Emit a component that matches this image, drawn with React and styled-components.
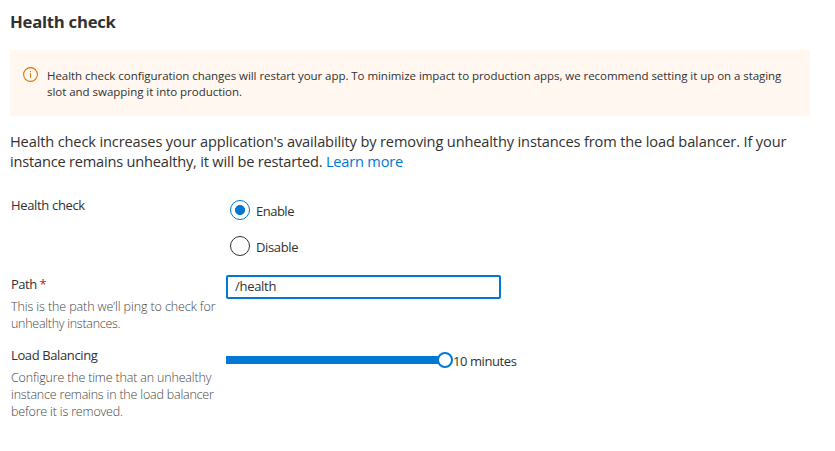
import React from "react";
import styled, { createGlobalStyle } from "styled-components";

const GlobalStyle = createGlobalStyle`
  * { box-sizing: border-box; }
  body {
    margin: 0;
    background: #fff;
    color: #323130;
    font-family: "Open Sans", "Noto Sans", sans-serif;
    font-size: 13px;
  }
`;

const Page = styled.main`
  width: 835px;
  height: 451px;
  padding: 10px 25px 0 10px;
  overflow: hidden;
`;

const Line = styled.span`
  display: block;
  white-space: nowrap;
  letter-spacing: ${(p) => p.$track || 0}px;
`;

const Title = styled.h1`
  margin: 0 0 16px;
  font-size: 16.7px;
  line-height: 24px;
  font-weight: 700;
`;

const Notice = styled.section`
  display: flex;
  gap: 9px;
  height: 66px;
  padding: 17px 13px 0;
  background: #fff7f0;
`;

const NoticeIcon = styled.svg`
  width: 15px;
  height: 15px;
  flex: none;
`;

const NoticeText = styled.p`
  margin: 1px 0 0;
  font-size: 11.5px;
  line-height: 16px;
`;

const Description = styled.p`
  margin: 15px 0 0;
  font-size: 14.6px;
  line-height: 20px;
`;

const Link = styled.a`
  color: #0078d4;
  text-decoration: none;
`;

const Form = styled.form`
  padding-left: 1px;
  margin-top: 26px;
`;

const Row = styled.div`
  display: grid;
  grid-template-columns: 215px 1fr;
  height: ${(p) => p.$height}px;
`;

const Label = styled.div`
  font-size: 13px;
  line-height: 17px;
`;

const Required = styled.span`
  color: #b8202b;
`;

const Hint = styled.div`
  margin-top: 5px;
  color: #484644;
  font-size: 12.5px;
  font-weight: 300;
  line-height: 17px;
`;

const RadioGroup = styled.div`
  display: flex;
  flex-direction: column;
  gap: 16px;
  padding: 3px 0 0 4px;
`;

const RadioOption = styled.label`
  display: flex;
  align-items: center;
  gap: 6px;
  height: 20px;
  line-height: 20px;

  span { padding-top: 2px; }
`;

const Radio = styled.input`
  appearance: none;
  width: 20px;
  height: 20px;
  margin: 0;
  border: 1px solid #323130;
  border-radius: 50%;

  &:checked {
    border-color: #0078d4;
    background: radial-gradient(circle, #0078d4 4.7px, transparent 5.3px);
  }
`;

const PathInput = styled.input`
  width: 275px;
  height: 24px;
  margin-top: -1px;
  padding: 0 7px 2px;
  border: 2px solid #0078d4;
  border-radius: 2px;
  outline: none;
  color: #323130;
  font: inherit;
  letter-spacing: ${(p) => p.$track || 0}px;
`;

const SliderField = styled.div`
  display: flex;
  align-items: center;
  height: 16px;
  margin-top: 5px;
`;

const Track = styled.div`
  width: 212px;
  height: 8px;
  background: #0078d4;
`;

const Thumb = styled.div`
  width: 16px;
  height: 16px;
  margin-left: -1px;
  border: 2px solid #0078d4;
  border-radius: 50%;
  background: #fff;
`;

const SliderValue = styled.output`
  padding-top: 2px;
`;

export default function App() {
  return (
    <>
      <GlobalStyle />
      <Page>
        <Title><Line $track={-0.25}>Health check</Line></Title>
        <Notice>
          <NoticeIcon viewBox="0 0 15 15" fill="none" stroke="#db7500">
            <circle cx="7.5" cy="7.5" r="6.9" strokeWidth="1.1" />
            <path d="M7.5 6.2V11M7.5 4v1.1" />
          </NoticeIcon>
          <NoticeText>
            <Line $track={-0.048}>Health check configuration changes will restart your app. To minimize impact to production apps, we recommend setting it up on a staging</Line>
            <Line $track={-0.03}>slot and swapping it into production.</Line>
          </NoticeText>
        </Notice>
        <Description>
          <Line $track={-0.14}>Health check increases your application's availability by removing unhealthy instances from the load balancer. If your</Line>
          <Line $track={-0.2}>instance remains unhealthy, it will be restarted. <Link>Learn more</Link></Line>
        </Description>
        <Form>
          <Row $height={79}>
            <Label><Line $track={-0.34}>Health check</Line></Label>
            <RadioGroup>
              <RadioOption><Radio type="radio" name="status" defaultChecked /><Line $track={-0.5}>Enable</Line></RadioOption>
              <RadioOption><Radio type="radio" name="status" /><Line $track={-0.35}>Disable</Line></RadioOption>
            </RadioGroup>
          </Row>
          <Row $height={71}>
            <div>
              <Label><Line $track={-0.5}>Path <Required>*</Required></Line></Label>
              <Hint>
                <Line $track={-0.1}>This is the path we’ll ping to check for</Line>
                <Line $track={-0.28}>unhealthy instances.</Line>
              </Hint>
            </div>
            <PathInput defaultValue="/health" $track={-0.3} />
          </Row>
          <Row $height={80}>
            <div>
              <Label><Line $track={-0.38}>Load Balancing</Line></Label>
              <Hint>
                <Line $track={-0.17}>Configure the time that an unhealthy</Line>
                <Line $track={-0.2}>instance remains in the load balancer</Line>
                <Line $track={-0.18}>before it is removed.</Line>
              </Hint>
            </div>
            <SliderField>
              <Track />
              <Thumb />
              <SliderValue><Line $track={-0.42}>10 minutes</Line></SliderValue>
            </SliderField>
          </Row>
        </Form>
      </Page>
    </>
  );
}
